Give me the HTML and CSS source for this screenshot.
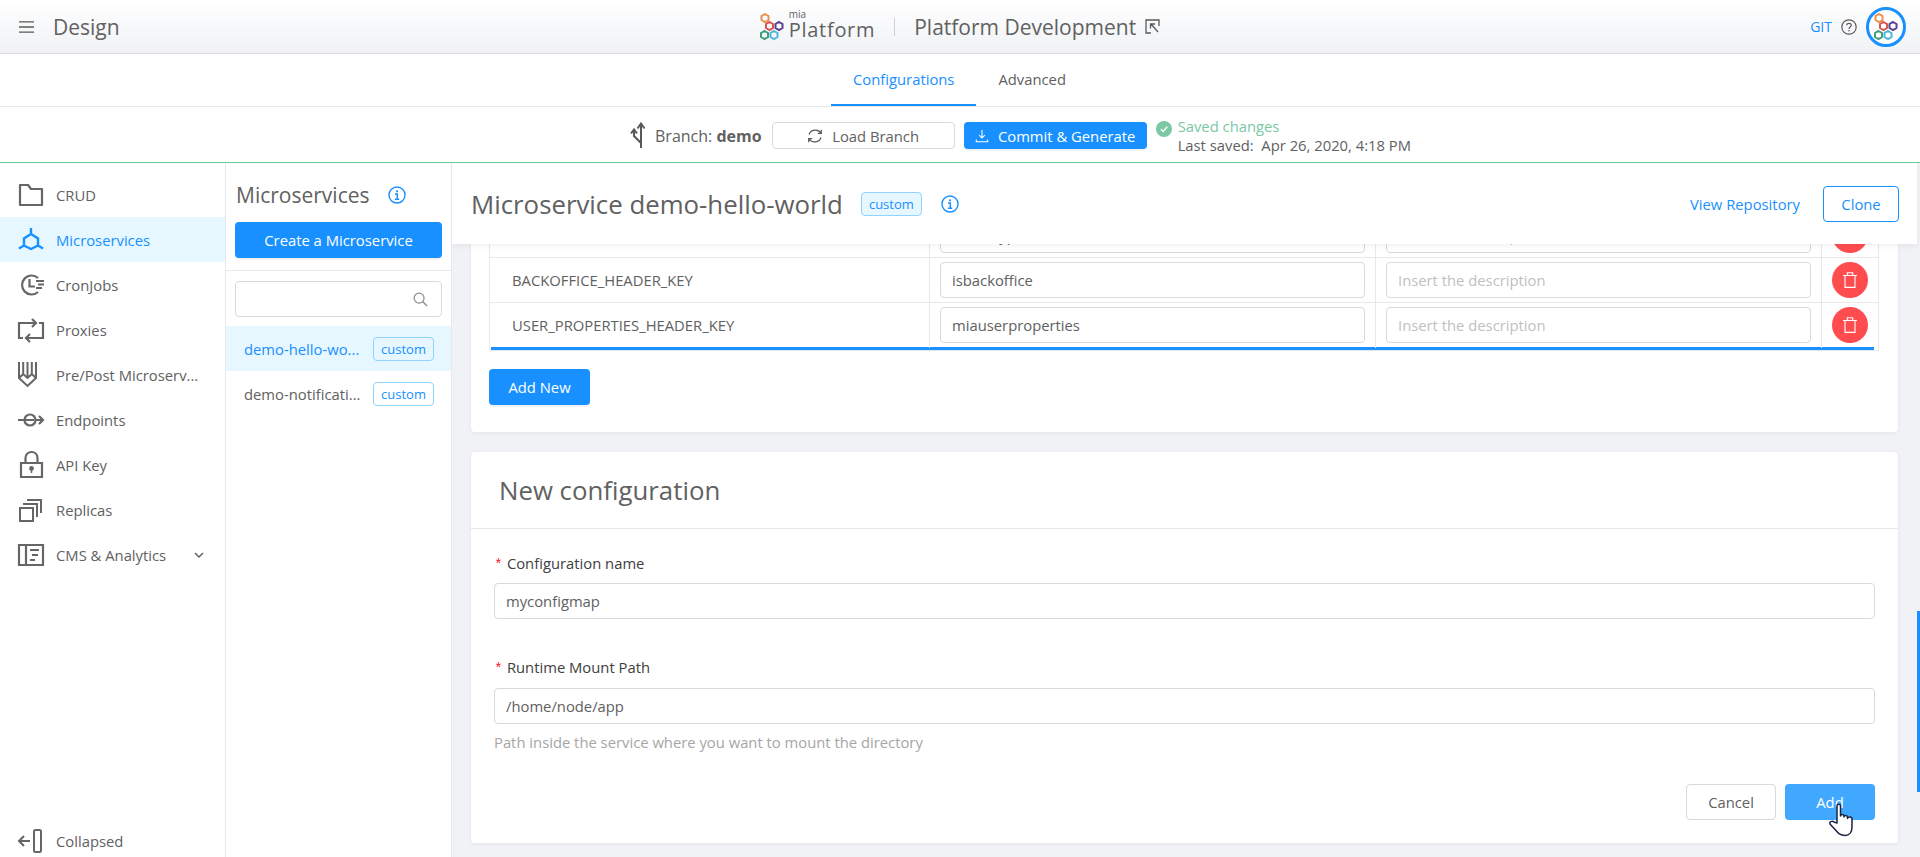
FILE: index.html
```html
<!DOCTYPE html>
<html lang="en">
<head>
  <meta charset="UTF-8" />
  <meta name="viewport" content="width=device-width, initial-scale=1.0" />
  <title>Design - Platform Development</title>
  <link rel="stylesheet" href="styles.css">
</head>
<body>
  <svg class="sprites" aria-hidden="true">
    <symbol id="hexlogo" viewBox="0 0 24 28">
      <g fill="none" stroke-width="2">
        <path stroke="#e8914f" d="M5 1 8.500 3V7L5 9 1.500 7V3Z" />
        <path stroke="#d9534f" d="M9.500 9 13 11V15L9.500 17 6 15V11Z" />
        <path stroke="#5b3f8f" d="M19 9 22.500 11V15L19 17 15.500 15V11Z" />
        <path stroke="#3f9e7a" d="M4.500 18 8 20V24L4.500 26 1 24V20Z" />
        <path stroke="#4db6d9" d="M14 18 17.500 20V24L14 26 10.500 24V20Z" />
      </g>
    </symbol>
    <symbol id="info" viewBox="0 0 18 18">
      <circle cx="9" cy="9" r="8" fill="none" stroke="currentColor" stroke-width="1.4" />
      <path fill="none" stroke="currentColor" stroke-width="1.5" d="M7 8H9.3V13M7 13.2H11.2" />
      <circle cx="9" cy="5.3" r="1.1" fill="currentColor" />
    </symbol>
    <symbol id="trash" viewBox="0 0 16 16">
      <path fill="none" stroke="#fff" stroke-width="1.1" d="M1 3.5H15M3 3.500V15.400H13V3.500M5.300 3.500V.8H10.700V3.500" />
    </symbol>
  </svg>

  <header class="topbar">
    <div class="topbar-left">
      <svg class="menu-icon" viewBox="0 0 16 14"><path fill="none" stroke="#595959" stroke-width="1.4" d="M0 1.5H16M0 7H16M0 12.5H16" /></svg>
      <span class="topbar-title">Design</span>
    </div>
    <div class="topbar-center">
      <svg class="logo"><use href="#hexlogo" /></svg>
      <div class="logo-text"><span class="logo-mia">mia</span><span class="logo-name">Platform</span></div>
      <span class="topbar-sep"></span>
      <span class="project-name">Platform Development</span>
      <svg class="ext-icon" viewBox="0 0 15 15"><path fill="none" stroke="#595959" stroke-width="1.3" d="M6 14H1V1H14V7M6 5 13 13M5.5 9.5V5H10" /></svg>
    </div>
    <div class="topbar-right">
      <span class="git-link">GIT</span>
      <svg class="help-icon" viewBox="0 0 16 16">
        <circle cx="8" cy="8" r="7.2" fill="none" stroke="#595959" stroke-width="1.2" />
        <path fill="none" stroke="#595959" stroke-width="1.2" d="M5.7 6.3C5.7 3.6 10.3 3.6 10.3 6.3 10.3 8 8 8 8 9.9" />
        <circle cx="8" cy="11.8" r=".8" fill="#595959" />
      </svg>
      <span class="avatar"><svg class="avatar-logo"><use href="#hexlogo" /></svg></span>
    </div>
  </header>

  <nav class="tabs">
    <a class="tab active">Configurations</a>
    <a class="tab">Advanced</a>
  </nav>

  <div class="branch-bar">
    <svg class="branch-icon" viewBox="0 0 16 27"><path fill="none" stroke="#595959" stroke-width="2" d="M11 26V2M7.500 6.500 11 1.500 14.500 6.500M11 21 4 14V9M1 11.500 4 7.500 7 11.500" /></svg>
    <span class="branch-label">Branch: <b>demo</b></span>
    <button class="btn btn-default btn-load">
      <svg class="btn-icon" viewBox="0 0 16 16"><path fill="none" stroke="#595959" stroke-width="1.2" d="M2 6.5C3.5 1.5 11 .5 14 5M14 9.5C12.5 14.5 5 15.5 2 11M14.3 1.8V5.3H10.8M1.7 14.2V10.7H5.2" /></svg>
      Load Branch
    </button>
    <button class="btn btn-primary btn-commit">
      <svg class="btn-icon btn-icon-small" viewBox="0 0 16 16"><path fill="none" stroke="#fff" stroke-width="1.2" d="M8 1V10M4.8 7 8 10.4 11.2 7M1.5 12V14.5H14.5V12" /></svg>
      Commit &amp; Generate
    </button>
    <div class="save-state">
      <svg class="check-icon" viewBox="0 0 16 16"><circle cx="8" cy="8" r="8" fill="#7bc8a4" /><path fill="none" stroke="#fff" stroke-width="1.5" d="M4.8 8.2 7.2 10.5 11.2 5.8" /></svg>
      <div class="save-text">
        <div class="saved">Saved changes</div>
        <div class="last-saved">Last saved:&nbsp; Apr 26, 2020, 4:18 PM</div>
      </div>
    </div>
  </div>

  <div class="workspace">
    <aside class="sidebar">
      <a class="nav-item">
        <svg class="nav-icon" viewBox="0 0 26 24"><path fill="none" stroke="#666" stroke-width="2.200" d="M2 22V2H10L13 6H24V22Z" stroke-linejoin="round" /></svg>
        CRUD
      </a>
      <a class="nav-item active">
        <svg class="nav-icon" viewBox="0 0 26 24"><path fill="none" stroke="#1890ff" stroke-width="2.400" d="M13 6 20 10.500V17.500L13 21 6 17.500V10.500ZM13 0V6M20 17.500 25 20.500M6 17.500 1 20.500" /></svg>
        Microservices
      </a>
      <a class="nav-item">
        <svg class="nav-icon" viewBox="0 0 26 24"><path fill="none" stroke="#666" stroke-width="2.200" d="M20 5A9.500 9.500 0 1 0 20 19M11.500 6V13.500H17M18 8H26M20 11.500H26M18 15H24" /></svg>
        CronJobs
      </a>
      <a class="nav-item">
        <svg class="nav-icon" viewBox="0 0 26 24"><path fill="none" stroke="#666" stroke-width="2.200" d="M5 20H1V5H18M14 1 18 5 14 9M21 5H25V20H8M12 16 8 20 12 24" /></svg>
        Proxies
      </a>
      <a class="nav-item">
        <svg class="nav-icon" viewBox="0 0 26 24"><path fill="none" stroke="#666" stroke-width="2" d="M1 -1V15L9.500 23 18 15V-1M5.200 -1V11M9.500 -1V15M13.800 -1V11M1 15 5.200 11 9.500 15 13.800 11 18 15" /></svg>
        Pre/Post Microserv...
      </a>
      <a class="nav-item">
        <svg class="nav-icon" viewBox="0 0 26 24"><circle cx="12" cy="12" r="5.500" fill="none" stroke="#666" stroke-width="2.200" /><path fill="none" stroke="#666" stroke-width="2.200" d="M0 12H16M18 12H24M21 8 25 12 21 16" /></svg>
        Endpoints
      </a>
      <a class="nav-item">
        <svg class="nav-icon" viewBox="0 0 26 24"><path fill="none" stroke="#666" stroke-width="2.200" d="M3 10H24V24H3ZM7.500 10V5C7.500 -3 19.500 -3 19.500 5V10" /><circle cx="13.500" cy="15.500" r="2.400" fill="#666" /><path stroke="#666" stroke-width="1.500" d="M13.500 16V20" /></svg>
        API Key
      </a>
      <a class="nav-item">
        <svg class="nav-icon" viewBox="0 0 26 24"><path fill="none" stroke="#666" stroke-width="2" d="M2 10H15V23H2ZM5 6H19V19M9 2H23V15" /></svg>
        Replicas
      </a>
      <a class="nav-item">
        <svg class="nav-icon" viewBox="0 0 26 24"><path fill="none" stroke="#666" stroke-width="2.200" d="M1 2H25V22H1ZM8 2V22M12 7H21M14 12H20M12 17H17" /></svg>
        CMS &amp; Analytics
        <svg class="chevron" viewBox="0 0 10 6"><path fill="none" stroke="#595959" stroke-width="1.400" d="M1 1 5 5 9 1" /></svg>
      </a>
      <a class="nav-item nav-bottom">
        <svg class="nav-icon" viewBox="0 0 26 24"><rect x="16" y="1" width="7" height="22" rx="1.500" fill="none" stroke="#666" stroke-width="2" /><path fill="none" stroke="#666" stroke-width="2" d="M12 12H1M6 7 1 12 6 17" /></svg>
        Collapsed
      </a>
    </aside>

    <section class="service-panel">
      <div class="panel-title">
        <span>Microservices</span>
        <svg class="info-icon"><use href="#info" /></svg>
      </div>
      <button class="btn btn-primary btn-create">Create a Microservice</button>
      <div class="panel-divider"></div>
      <div class="search-box">
        <svg class="search-icon" viewBox="0 0 16 16"><circle cx="6.500" cy="6.500" r="5.300" fill="none" stroke="#8c8c8c" stroke-width="1.300" /><path stroke="#8c8c8c" stroke-width="1.500" d="M10.500 10.500 15 15" /></svg>
      </div>
      <ul class="service-list">
        <li class="service-item selected"><span class="service-name">demo-hello-wo...</span><span class="tag">custom</span></li>
        <li class="service-item"><span class="service-name">demo-notificati...</span><span class="tag">custom</span></li>
      </ul>
    </section>

    <main class="main">
      <div class="main-header">
        <h1>Microservice demo-hello-world</h1>
        <span class="tag tag-filled">custom</span>
        <svg class="info-icon"><use href="#info" /></svg>
        <a class="repo-link">View Repository</a>
        <button class="btn btn-outline">Clone</button>
      </div>

      <div class="main-content">
        <div class="card card-table">
          <div class="env-table">
            <div class="env-row">
              <div class="env-key">CLIENTTYPE_HEADER_KEY</div>
              <div class="env-cell"><div class="input">client-type</div></div>
              <div class="env-cell"><div class="input placeholder">Insert the description</div></div>
              <div class="env-action"><span class="btn-delete"><svg class="trash-icon"><use href="#trash" /></svg></span></div>
            </div>
            <div class="env-row">
              <div class="env-key">BACKOFFICE_HEADER_KEY</div>
              <div class="env-cell"><div class="input">isbackoffice</div></div>
              <div class="env-cell"><div class="input placeholder">Insert the description</div></div>
              <div class="env-action"><span class="btn-delete"><svg class="trash-icon"><use href="#trash" /></svg></span></div>
            </div>
            <div class="env-row last">
              <div class="env-key">USER_PROPERTIES_HEADER_KEY</div>
              <div class="env-cell"><div class="input">miauserproperties</div></div>
              <div class="env-cell"><div class="input placeholder">Insert the description</div></div>
              <div class="env-action"><span class="btn-delete"><svg class="trash-icon"><use href="#trash" /></svg></span></div>
            </div>
            <div class="table-bar"></div>
          </div>
          <button class="btn btn-primary btn-addnew">Add New</button>
        </div>

        <div class="card card-form">
          <h2 class="card-title">New configuration</h2>
          <div class="card-body">
            <label class="field-label"><span class="required">*</span>Configuration name</label>
            <div class="input">myconfigmap</div>
            <label class="field-label second"><span class="required">*</span>Runtime Mount Path</label>
            <div class="input">/home/node/app</div>
            <p class="field-help">Path inside the service where you want to mount the directory</p>
            <div class="form-actions">
              <button class="btn btn-default btn-cancel">Cancel</button>
              <button class="btn btn-hover btn-add">Add</button>
            </div>
          </div>
        </div>
      </div>

      <div class="scroll-thumb"></div>
      <svg class="cursor-hand" viewBox="0 0 26 34">
        <path fill="#fff" stroke="#1c2340" stroke-width="1.500" stroke-linejoin="round" d="M9 20V3C9 .5 12.500 .5 12.500 3V13C12.500 11 16 11 16 13V14C16 12 19.500 12 19.500 14.500V15.500C19.500 13.500 24 13.500 24 16V24C24 29 21.500 32.500 17 32.500 12 32.500 10 30 7 26.500L2 21C1 19 4 17.500 6 19Z" />
      </svg>
    </main>
  </div>
</body>
</html>
```

FILE: styles.css
```css
:root {
  --primary: #1890ff;
  --text: #616161;
  --text-dark: #404040;
  --border: #d9d9d9;
  --line: #e8e8e8;
  --selected: #e6f7ff;
  --page-bg: #f0f2f5;
  --danger: #ff4d4f;
}

* {
  box-sizing: border-box;
  margin: 0;
  padding: 0;
  font-family: 'Open Sans', 'Noto Sans', sans-serif;
}

html,
body {
  height: 100%;
  overflow: hidden;
}

body {
  display: flex;
  flex-direction: column;
  font-size: 14.8px;
  color: var(--text);
  background: #fff;
}

.sprites {
  display: none;
}

svg {
  display: block;
  flex: none;
  overflow: visible;
}

/* top bar */
.topbar {
  height: 54px;
  flex: none;
  display: grid;
  grid-template-columns: 1fr auto 1fr;
  align-items: center;
  padding: 0 14px;
  background: linear-gradient(180deg, #fff, #f0f2f5);
  border-bottom: 1px solid #d9d9de;
}

.topbar-left {
  display: flex;
  align-items: center;
  gap: 19px;
  margin-left: 5px;
}

.menu-icon {
  width: 15px;
  height: 14px;
}

.topbar-title {
  font-size: 21px;
}

.topbar-center {
  display: flex;
  align-items: center;
}

.logo {
  width: 24px;
  height: 28px;
  margin-right: 5px;
}

.logo-text {
  display: flex;
  flex-direction: column;
  margin-top: -3px;
  color: var(--text);
}

.logo-mia {
  font-size: 10px;
  line-height: 9px;
}

.logo-name {
  font-size: 20px;
  line-height: 22px;
  letter-spacing: 0.7px;
}

.topbar-sep {
  width: 1px;
  height: 18px;
  margin: 0 19px;
  background: #d0d0d0;
}

.project-name {
  font-size: 21px;
}

.ext-icon {
  width: 15px;
  height: 15px;
  margin-left: 9px;
}

.topbar-right {
  display: flex;
  align-items: center;
  justify-content: flex-end;
  gap: 9px;
}

.git-link {
  font-size: 14px;
  color: var(--primary);
}

.help-icon {
  width: 16px;
  height: 16px;
}

.avatar {
  display: flex;
  align-items: center;
  justify-content: center;
  width: 40px;
  height: 40px;
  border: 3px solid var(--primary);
  border-radius: 50%;
  background: #fff;
}

.avatar-logo {
  width: 24px;
  height: 28px;
}

/* tabs */
.tabs {
  height: 53px;
  flex: none;
  display: flex;
  justify-content: center;
  gap: 7px;
  padding-right: 8px;
  border-bottom: 1px solid var(--line);
}

.tab {
  height: 52px;
  padding: 0 15px;
  line-height: 50px;
}

.tab:first-child {
  padding: 0 22px;
}

.tab.active {
  color: var(--primary);
  border-bottom: 2px solid var(--primary);
}

/* branch bar */
.branch-bar {
  height: 56px;
  flex: none;
  display: flex;
  align-items: center;
  gap: 9px;
  padding: 2px 0 0 630px;
  border-bottom: 1px solid #6dc898;
}

.branch-icon {
  width: 16px;
  height: 27px;
}

.branch-label {
  margin-right: 1px;
  font-size: 16px;
}

.btn {
  display: inline-flex;
  align-items: center;
  justify-content: center;
  height: 36px;
  border-radius: 4px;
  border: 1px solid transparent;
  font-size: 14.8px;
  background: #fff;
  color: var(--text);
}

.btn-primary {
  background: var(--primary);
  color: #fff;
  box-shadow: 0 2px 0 rgba(0, 0, 0, 0.05);
}

.btn-default {
  border-color: var(--border);
}

.btn-outline {
  border-color: var(--primary);
  color: var(--primary);
  width: 76px;
}

.btn-hover {
  background: #40a9ff;
  color: #fff;
}

.btn-load,
.btn-commit {
  height: 27px;
  width: 183px;
  gap: 9px;
}

.btn-icon {
  width: 16px;
  height: 16px;
}

.btn-icon-small {
  width: 14px;
  height: 14px;
}

.save-state {
  display: flex;
  align-items: center;
  gap: 6px;
}

.check-icon {
  width: 16px;
  height: 16px;
  margin-top: -14px;
}

.save-text {
  line-height: 18px;
}

.saved {
  margin-top: -1px;
  margin-bottom: 1px;
  color: #7bc8a4;
}

/* workspace */
.workspace {
  flex: 1;
  min-height: 0;
  display: flex;
}

.sidebar {
  width: 226px;
  flex: none;
  display: flex;
  flex-direction: column;
  padding-top: 9px;
  border-right: 1px solid var(--line);
}

.nav-item {
  height: 45px;
  flex: none;
  display: flex;
  align-items: center;
  gap: 12px;
  padding: 1px 0 0 18px;
}

.nav-item.active {
  background: var(--selected);
  color: var(--primary);
}

.nav-icon {
  width: 26px;
  height: 24px;
}

.chevron {
  width: 10px;
  height: 6px;
  margin-left: 16px;
}

.nav-bottom {
  margin-top: auto;
  height: 34px;
}

.service-panel {
  width: 226px;
  flex: none;
  border-right: 1px solid var(--line);
}

.panel-title {
  height: 59px;
  display: flex;
  align-items: center;
  gap: 18px;
  padding: 5px 0 0 10px;
  font-size: 21px;
}

.info-icon {
  width: 18px;
  height: 18px;
  color: var(--primary);
}

.btn-create {
  display: flex;
  width: 207px;
  margin-left: 9px;
}

.panel-divider {
  height: 1px;
  margin-top: 12px;
  background: var(--line);
}

.search-box {
  width: 207px;
  height: 36px;
  margin: 10px 0 9px 9px;
  display: flex;
  align-items: center;
  justify-content: flex-end;
  padding-right: 13px;
  border: 1px solid var(--border);
  border-radius: 4px;
}

.search-icon {
  width: 15px;
  height: 15px;
}

.service-list {
  list-style: none;
}

.service-item {
  height: 45px;
  display: flex;
  align-items: center;
  justify-content: space-between;
  padding: 0 17px 0 18px;
  white-space: nowrap;
}

.service-item.selected {
  background: var(--selected);
  color: var(--primary);
}

.tag {
  flex: none;
  width: 61px;
  height: 24px;
  line-height: 22px;
  text-align: center;
  font-size: 13px;
  color: var(--primary);
  border: 1px solid #91d5ff;
  border-radius: 4px;
  background: #fff;
}

.service-item.selected .tag {
  background: transparent;
}

.tag-filled {
  background: var(--selected);
}

/* main area */
.main {
  position: relative;
  flex: 1;
  min-width: 0;
  display: flex;
  flex-direction: column;
  overflow: hidden;
  background: var(--page-bg);
}

.main-header {
  position: relative;
  z-index: 2;
  width: 1465px;
  height: 81px;
  flex: none;
  display: flex;
  align-items: center;
  padding: 0 18px 0 19px;
  background: #fff;
  box-shadow: 0 2px 6px rgba(0, 0, 0, 0.06);
}

.main-header h1 {
  font-size: 25.8px;
  font-weight: 400;
  margin-right: 18px;
}

.main-header .info-icon {
  margin-left: 19px;
}

.repo-link {
  margin-left: auto;
  margin-right: 23px;
  color: var(--primary);
}

.main-content {
  margin-top: -31px;
  padding: 0 22px 0 19px;
}

.card {
  background: #fff;
  border-radius: 4px;
  box-shadow: 0 1px 4px rgba(0, 0, 0, 0.06);
}

.card-table {
  padding: 0 19px 27px 18px;
}

.env-table {
  border-left: 1px solid var(--line);
  border-right: 1px solid var(--line);
  border-bottom: 1px solid var(--line);
}

.env-row {
  height: 45px;
  display: grid;
  grid-template-columns: 439px 446px 446px 1fr;
  border-bottom: 1px solid var(--line);
}

.env-row.last {
  height: 44px;
  border-bottom: 0;
}

.env-key {
  padding-left: 22px;
  line-height: 45px;
  white-space: nowrap;
}

.env-cell {
  padding: 4px 10px;
  border-left: 1px solid var(--line);
}

.env-action {
  padding: 4px 0 0 10px;
  border-left: 1px solid var(--line);
}

.input {
  height: 36px;
  line-height: 35px;
  padding: 0 11px;
  border: 1px solid var(--border);
  border-radius: 4px;
  background: #fff;
}

.placeholder {
  color: #bfbfbf;
}

.btn-delete {
  display: flex;
  align-items: center;
  justify-content: center;
  width: 36px;
  height: 36px;
  border-radius: 50%;
  background: var(--danger);
}

.trash-icon {
  width: 16px;
  height: 16px;
}

.table-bar {
  height: 3px;
  margin: 0 4px 0 1px;
  background: var(--primary);
}

.btn-addnew {
  width: 101px;
  margin-top: 18px;
}

.card-form {
  margin-top: 20px;
}

.card-title {
  height: 77px;
  padding: 0 28px;
  line-height: 77px;
  font-size: 25.8px;
  font-weight: 400;
  border-bottom: 1px solid var(--line);
}

.card-body {
  padding: 23px;
}

.field-label {
  display: block;
  height: 31px;
  line-height: 22px;
  color: var(--text-dark);
}

.field-label.second {
  margin-top: 37px;
  height: 32px;
}

.required {
  color: #f5222d;
  margin-right: 4px;
  font-family: 'Liberation Mono', monospace;
}

.field-help {
  margin-top: 7px;
  line-height: 22px;
  color: #a6a6a6;
}

.form-actions {
  display: flex;
  justify-content: flex-end;
  gap: 9px;
  margin-top: 31px;
}

.btn-cancel,
.btn-add {
  width: 90px;
}

.scroll-thumb {
  position: absolute;
  top: 448px;
  right: 0;
  width: 3px;
  height: 181px;
  background: var(--primary);
}

.cursor-hand {
  position: absolute;
  z-index: 3;
  left: 1376px;
  top: 640px;
  width: 26px;
  height: 34px;
}
```
